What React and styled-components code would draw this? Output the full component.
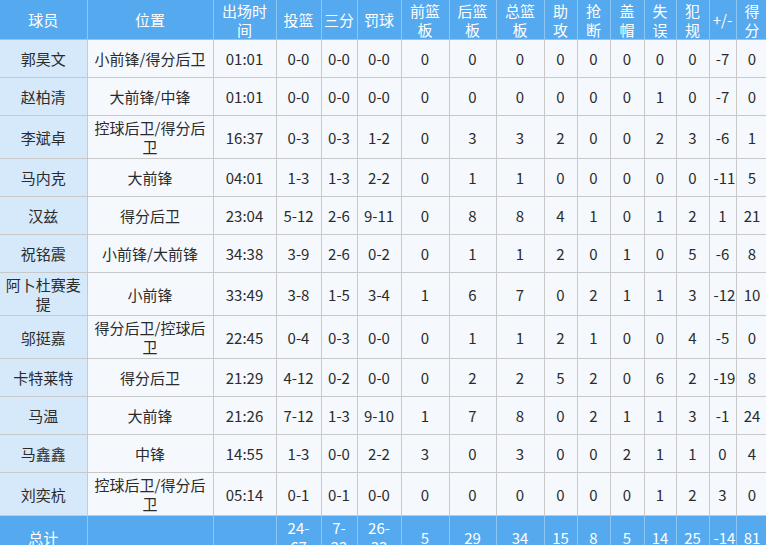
import React from "react";
import styled, { createGlobalStyle } from "styled-components";

const COLORS = {
  head: "#55a9ee",
  headLine: "#8cc6f3",
  nameCell: "#d6e9fa",
  cell: "#f5f9fd",
  line: "#c9c9c9",
  text: "#2b2b2b",
};

const GlobalStyle = createGlobalStyle`
  html, body {
    margin: 0;
    padding: 0;
    overflow: hidden;
    background: #ffffff;
  }
  body {
    font-family: "Noto Sans CJK SC", "Noto Sans", sans-serif;
  }
`;

const COLUMNS = [
  { label: "球员", width: 87 },
  { label: "位置", width: 126 },
  { label: "出场时间", width: 63 },
  { label: "投篮", width: 45 },
  { label: "三分", width: 36 },
  { label: "罚球", width: 44 },
  { label: "前篮板", width: 48 },
  { label: "后篮板", width: 47 },
  { label: "总篮板", width: 48 },
  { label: "助攻", width: 33 },
  { label: "抢断", width: 33 },
  { label: "盖帽", width: 34 },
  { label: "失误", width: 32 },
  { label: "犯规", width: 33 },
  { label: "+/-", width: 27 },
  { label: "得分", width: 32 },
];

const PLAYERS = [
  ["郭昊文", "小前锋/得分后卫", "01:01", "0-0", "0-0", "0-0", 0, 0, 0, 0, 0, 0, 0, 0, -7, 0],
  ["赵柏清", "大前锋/中锋", "01:01", "0-0", "0-0", "0-0", 0, 0, 0, 0, 0, 0, 1, 0, -7, 0],
  ["李斌卓", "控球后卫/得分后卫", "16:37", "0-3", "0-3", "1-2", 0, 3, 3, 2, 0, 0, 2, 3, -6, 1],
  ["马内克", "大前锋", "04:01", "1-3", "1-3", "2-2", 0, 1, 1, 0, 0, 0, 0, 0, -11, 5],
  ["汉兹", "得分后卫", "23:04", "5-12", "2-6", "9-11", 0, 8, 8, 4, 1, 0, 1, 2, 1, 21],
  ["祝铭震", "小前锋/大前锋", "34:38", "3-9", "2-6", "0-2", 0, 1, 1, 2, 0, 1, 0, 5, -6, 8],
  ["阿卜杜赛麦提", "小前锋", "33:49", "3-8", "1-5", "3-4", 1, 6, 7, 0, 2, 1, 1, 3, -12, 10],
  ["邬挺嘉", "得分后卫/控球后卫", "22:45", "0-4", "0-3", "0-0", 0, 1, 1, 2, 1, 0, 0, 4, -5, 0],
  ["卡特莱特", "得分后卫", "21:29", "4-12", "0-2", "0-0", 0, 2, 2, 5, 2, 0, 6, 2, -19, 8],
  ["马温", "大前锋", "21:26", "7-12", "1-3", "9-10", 1, 7, 8, 0, 2, 1, 1, 3, -1, 24],
  ["马鑫鑫", "中锋", "14:55", "1-3", "0-0", "2-2", 3, 0, 3, 0, 0, 2, 1, 1, 0, 4],
  ["刘奕杭", "控球后卫/得分后卫", "05:14", "0-1", "0-1", "0-0", 0, 0, 0, 0, 0, 0, 1, 2, 3, 0],
];

const TOTAL = ["总计", "", "", "24-67", "7-22", "26-33", 5, 29, 34, 15, 8, 5, 14, 25, -14, 81];

const Table = styled.table`
  width: 768px;
  table-layout: fixed;
  border-collapse: collapse;
  font-size: 15px;
  line-height: 19px;
  color: ${COLORS.text};
  text-align: center;
`;

const HeadCell = styled.th`
  height: 39px;
  padding: 0 2px;
  background: ${COLORS.head};
  color: #ffffff;
  font-weight: normal;
  border: 1px solid ${COLORS.headLine};
  border-top: none;
  vertical-align: middle;
  &:first-child {
    border-left: none;
  }
`;

const Row = styled.tr`
  height: 38px;
`;

const Cell = styled.td`
  padding: 2px 4px;
  vertical-align: middle;
  background: ${(props) => (props.$name ? COLORS.nameCell : COLORS.cell)};
  border: 1px solid ${COLORS.line};
  &:first-child {
    border-left: none;
  }
`;

const TotalCell = styled.td`
  padding: 2px 4px;
  vertical-align: middle;
  background: ${COLORS.head};
  color: #ffffff;
  border: 1px solid ${COLORS.headLine};
  border-top: 1px solid ${COLORS.line};
  &:first-child {
    border-left: none;
  }
`;

export default function App() {
  return (
    <>
      <GlobalStyle />
      <Table>
        <colgroup>
          {COLUMNS.map((c) => (
            <col key={c.label} style={{ width: c.width }} />
          ))}
        </colgroup>
        <thead>
          <tr>
            {COLUMNS.map((c) => (
              <HeadCell key={c.label}>{c.label}</HeadCell>
            ))}
          </tr>
        </thead>
        <tbody>
          {PLAYERS.map((p) => (
            <Row key={p[0]}>
              {p.map((v, i) => (
                <Cell key={i} $name={i === 0}>
                  {v}
                </Cell>
              ))}
            </Row>
          ))}
          <Row>
            {TOTAL.map((v, i) => (
              <TotalCell key={i}>{v}</TotalCell>
            ))}
          </Row>
        </tbody>
      </Table>
    </>
  );
}
